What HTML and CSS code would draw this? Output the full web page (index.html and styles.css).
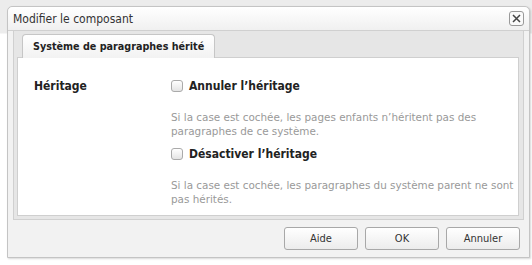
FILE: index.html
```html
<!DOCTYPE html>
<html lang="fr">
<head>
    <meta charset="UTF-8">
    <title>Modifier le composant</title>
    <link rel="stylesheet" href="styles.css">
</head>
<body>
    <div class="page">
        <div class="dialog">
            <div class="titlebar">
                <span class="title">Modifier le composant</span>
                <span class="close">
                    <svg width="11" height="11" viewBox="0 0 11 11">
                        <path d="M2 2 L9 9 M9 2 L2 9" stroke="#444" stroke-width="1.5" fill="none"/>
                    </svg>
                </span>
            </div>
            <div class="tabs">
                <div class="tabstrip">
                    <div class="tab">Système de paragraphes hérité</div>
                </div>
                <div class="panel">
                    <div class="row">
                        <div class="fieldlabel">Héritage</div>
                        <div class="fields">
                            <label class="check"><span class="box"></span>Annuler l’héritage</label>
                            <p class="desc">Si la case est cochée, les pages enfants n’héritent pas des<br>paragraphes de ce système.</p>
                            <label class="check"><span class="box"></span>Désactiver l’héritage</label>
                            <p class="desc">Si la case est cochée, les paragraphes du système parent ne sont<br>pas hérités.</p>
                        </div>
                    </div>
                </div>
            </div>
            <div class="footer">
                <button>Aide</button>
                <button>OK</button>
                <button>Annuler</button>
            </div>
        </div>
    </div>
</body>
</html>
```

FILE: styles.css
```css
body {
    margin: 0;
    background: #ffffff;
    font-family: "DejaVu Sans Condensed", "DejaVu Sans", sans-serif;
    font-size: 11px;
}
.page {
    height: 265px;
    padding: 6px 2px 0 7px;
    box-sizing: border-box;
    background: linear-gradient(#ececec, #ececec 33px, #ffffff 34px);
}
.dialog {
    width: 523px;
    height: 252px;
    box-sizing: border-box;
    border: 1px solid #c4c4c4;
    border-radius: 5px 5px 0 0;
    background: #f2f2f2;
    box-shadow: 1px 1px 2px rgba(0, 0, 0, 0.15);
    display: flex;
    flex-direction: column;
}
.titlebar {
    height: 23px;
    display: flex;
    align-items: center;
    justify-content: space-between;
    padding: 0 5px 0 5px;
    border-bottom: 1px solid #d0d0d0;
    background: linear-gradient(#ffffff, #f0f0f0);
    border-radius: 5px 5px 0 0;
}
.title {
    font-size: 12px;
    color: #333;
}
.close {
    width: 13px;
    height: 13px;
    border: 1px solid #999;
    border-radius: 3px;
    background: #fafafa;
    display: flex;
    align-items: center;
    justify-content: center;
}
.tabs {
    margin: 0 5px 0 5px;
    border: 1px solid #d0d0d0;
    border-top: none;
    background: #e6e6e6;
    padding: 0 4px 3px 3px;
}
.tabstrip {
    height: 26px;
    display: flex;
    align-items: flex-end;
    padding-left: 5px;
    border-bottom: 1px solid #cfcfcf;
}
.tab {
    height: 24px;
    line-height: 23px;
    padding: 0 10px;
    box-sizing: border-box;
    border: 1px solid #c6c6c6;
    border-bottom: none;
    border-radius: 4px 4px 0 0;
    background: linear-gradient(#ffffff, #f2f2f2);
    font-weight: bold;
    font-size: 10.7px;
    color: #222;
    margin-bottom: -1px;
}
.panel {
    background: #ffffff;
    border: 1px solid #cfcfcf;
    border-top: none;
    height: 158px;
    box-sizing: border-box;
    padding: 20px 16px 0 16px;
}
.row {
    display: flex;
}
.fieldlabel {
    width: 137px;
    flex-shrink: 0;
    font-weight: bold;
    font-size: 12px;
    color: #222;
    line-height: 16px;
}
.fields {
    flex: 1;
    min-width: 0;
}
.check {
    display: flex;
    align-items: center;
    font-weight: bold;
    font-size: 12px;
    color: #222;
    line-height: 16px;
}
.box {
    width: 10px;
    height: 10px;
    border: 1px solid #aaa;
    border-radius: 3px;
    background: linear-gradient(#ffffff, #e4e4e4);
    margin-right: 6px;
}
.desc {
    margin: 16px 0 8px 0;
    color: #999;
    font-family: "DejaVu Sans", sans-serif;
    font-size: 10.4px;
    line-height: 14px;
    white-space: nowrap;
}
.footer {
    flex: 1;
    display: flex;
    justify-content: flex-end;
    align-items: center;
    gap: 7px;
    padding-right: 9px;
}
button {
    width: 74px;
    height: 23px;
    border: 1px solid #a8a8a8;
    border-radius: 3px;
    background: linear-gradient(#ffffff, #ececec);
    font-family: inherit;
    font-size: 11px;
    color: #333;
}
```
